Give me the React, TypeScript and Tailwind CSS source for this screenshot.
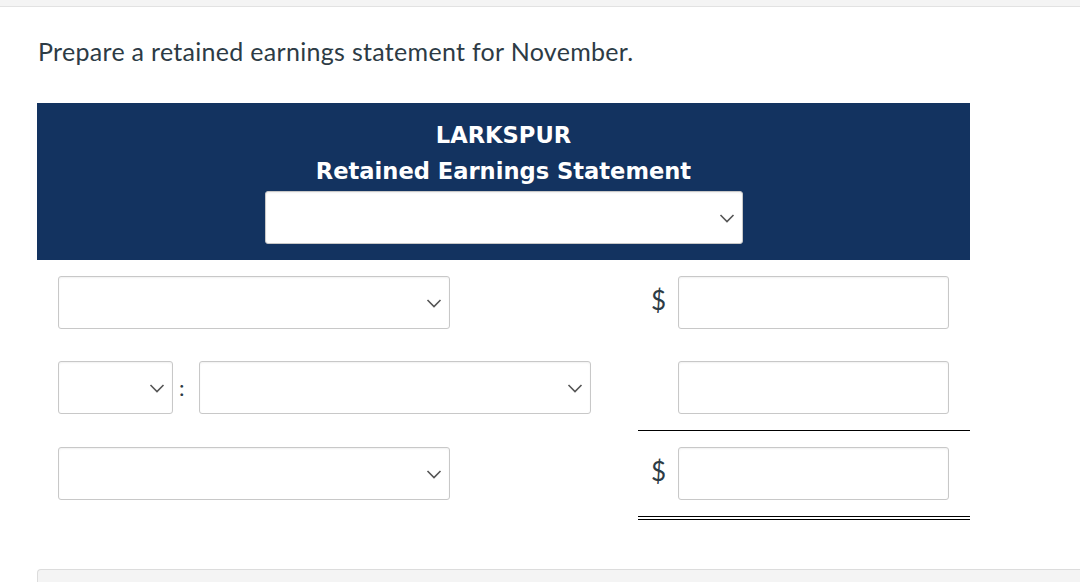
import React from "react";

function Chevron() {
  return (
    <svg width="16" height="10" viewBox="0 0 16 10" className="absolute right-[7px] top-1/2 -translate-y-1/2">
      <path d="M1.5 2 L8 8.5 L14.5 2" fill="none" stroke="#555" strokeWidth="1.6" />
    </svg>
  );
}

function Select({ className }: { className: string }) {
  return (
    <div
      className={
        "relative h-[53px] rounded-[3px] border border-[#c8c8c8] bg-white shadow-[inset_0_1px_2px_rgba(0,0,0,0.06)] " +
        className
      }
    >
      <Chevron />
    </div>
  );
}

function Input() {
  return (
    <div className="h-[53px] w-[271px] rounded-[3px] border border-[#c8c8c8] bg-white shadow-[inset_0_1px_2px_rgba(0,0,0,0.06)]" />
  );
}

function Dollar({ show }: { show: boolean }) {
  return (
    <div className="-mt-[5px] w-[40px] pl-[13px] text-[26px] leading-none text-[#2d3b45] font-['Lato','Liberation_Sans',sans-serif]">
      {show ? "$" : ""}
    </div>
  );
}

export default function App() {
  return (
    <div className="relative h-[582px] w-[1080px] overflow-hidden bg-white font-['Lato','Liberation_Sans',sans-serif]">
      <div className="h-[7px] border-b border-[#e2e2e2] bg-[#f4f4f4]" />
      <div className="pl-[38px] pt-[28px] text-[25px] leading-[32px] tracking-[0.3px] text-[#2d3b45]">
        Prepare a retained earnings statement for November.
      </div>
      <div className="ml-[37px] mt-[36px] w-[933px]">
        <div className="flex h-[157px] flex-col items-center bg-[#133360] pt-[17px] font-['DejaVu_Sans','Open_Sans',sans-serif] font-bold text-white">
          <div className="text-[22.6px] leading-[30px]">LARKSPUR</div>
          <div className="mt-[6px] text-[22.6px] leading-[30px]">Retained Earnings Statement</div>
          <Select className="mt-[5px] w-[478px] h-[52px]" />
        </div>
        <div className="flex items-start">
          <div className="flex flex-1 items-center py-4 pl-[21px]">
            <Select className="w-[392px]" />
          </div>
          <div className="flex w-[332px] items-center py-4">
            <Dollar show />
            <Input />
          </div>
        </div>
        <div className="flex items-start">
          <div className="flex flex-1 items-center py-4 pl-[21px]">
            <Select className="w-[115px]" />
            <span className="w-[26px] pl-[6px] text-left text-[22px] leading-none text-[#2d3b45]">:</span>
            <Select className="w-[392px]" />
          </div>
          <div className="flex w-[332px] items-center border-b border-black py-4">
            <Dollar show={false} />
            <Input />
          </div>
        </div>
        <div className="flex items-start">
          <div className="flex flex-1 items-center py-4 pl-[21px]">
            <Select className="w-[392px]" />
          </div>
          <div className="flex w-[332px] items-center border-b-4 border-double border-black py-4">
            <Dollar show />
            <Input />
          </div>
        </div>
      </div>
      <div className="absolute left-[37px] top-[569px] h-[40px] w-[1100px] rounded-tl-[4px] border-l border-t border-[#dcdcdc] bg-[#f4f4f4]" />
    </div>
  );
}
